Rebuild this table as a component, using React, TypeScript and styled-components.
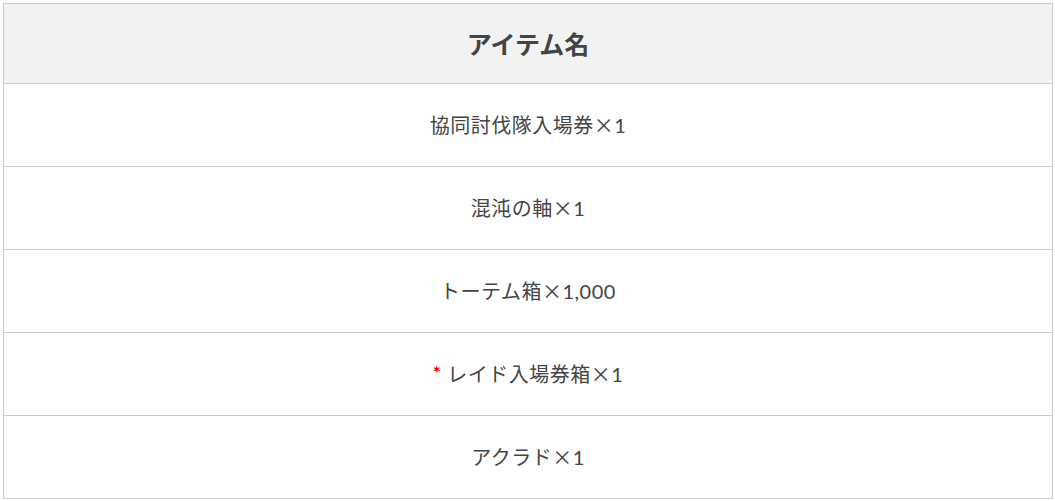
import React from 'react'
import styled, { createGlobalStyle } from 'styled-components'

const GlobalStyle = createGlobalStyle`
  html,
  body {
    background: #fff;
    margin: 0;
  }

  body {
    color: #444;
    font-family: Lato, 'Noto Sans CJK JP', sans-serif;
    padding: 3px;
  }
`

const Table = styled.table`
  border: 1px solid #ccc;
  border-collapse: collapse;
  width: 1050px;
`

const HeadCell = styled.th`
  background-color: #f2f2f2;
  border-bottom: 1px solid #ccc;
  color: #444;
  font-size: 25px;
  font-weight: 700;
  height: 79px;
  line-height: 30px;
  padding: 0;
  text-align: center;
  vertical-align: middle;
`

const Cell = styled.td`
  border-top: 1px solid #ccc;
  color: #444;
  font-size: 20px;
  height: 82px;
  letter-spacing: 0.5px;
  line-height: 28px;
  padding: 0;
  text-align: center;
  vertical-align: middle;
`

const Cross = styled.span`
  font-family: 'Noto Sans CJK JP', sans-serif;
`

const Mark = styled.span`
  color: #e00000;
  font-size: 19px;
  font-weight: 700;
  margin-right: 6px;
  position: relative;
  top: -2px;
`

interface Item {
  name: string
  count: string
  marked?: boolean
}

const items: Item[] = [
  { name: '協同討伐隊入場券', count: '1' },
  { name: '混沌の軸', count: '1' },
  { name: 'トーテム箱', count: '1,000' },
  { name: 'レイド入場券箱', count: '1', marked: true },
  { name: 'アクラド', count: '1' },
]

const App = () => {
  return (
    <>
      <GlobalStyle />
      <Table>
        <thead>
          <tr>
            <HeadCell>アイテム名</HeadCell>
          </tr>
        </thead>
        <tbody>
          {items.map((item, index) => (
            <tr key={index}>
              <Cell>
                {item.marked && <Mark>*</Mark>}
                {item.name}
                <Cross>×</Cross>
                {item.count}
              </Cell>
            </tr>
          ))}
        </tbody>
      </Table>
    </>
  )
}

export default App
